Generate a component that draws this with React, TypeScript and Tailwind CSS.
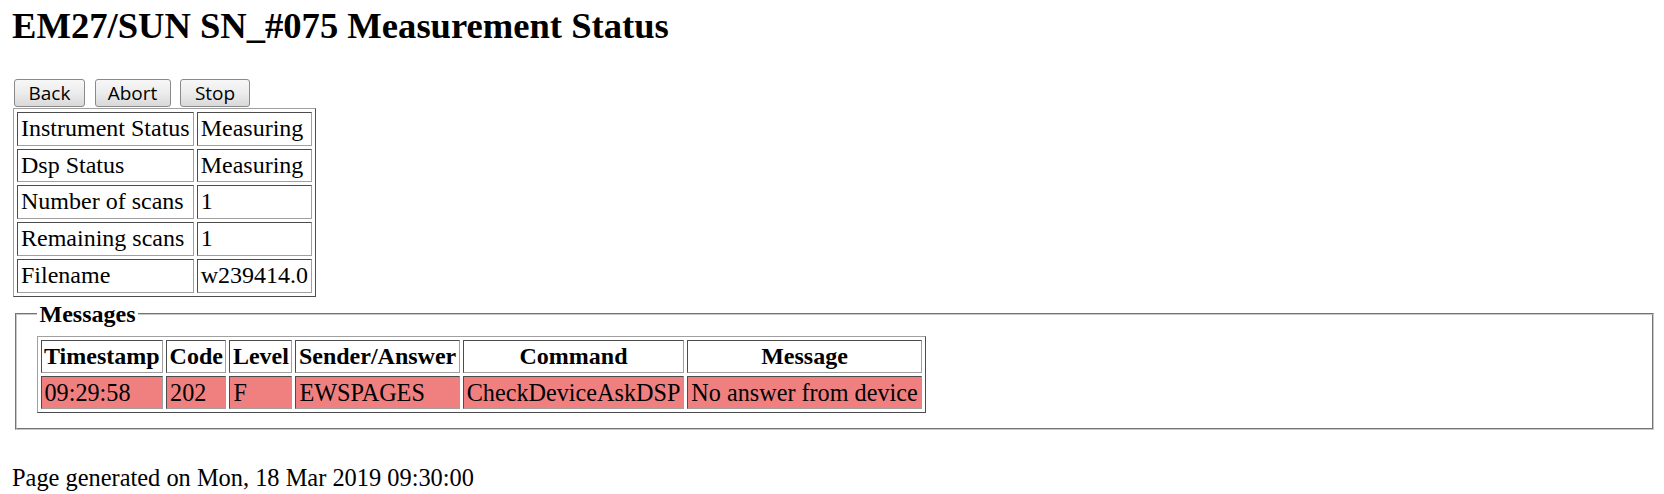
import React from "react";

const serif = "[font-family:'Liberation_Serif','Times_New_Roman',serif]";

const status: [string, string][] = [
  ["Instrument Status", "Measuring"],
  ["Dsp Status", "Measuring"],
  ["Number of scans", "1"],
  ["Remaining scans", "1"],
  ["Filename", "w239414.0"],
];

const headers = ["Timestamp", "Code", "Level", "Sender/Answer", "Command", "Message"];
const messages: string[][] = [
  ["09:29:58", "202", "F", "EWSPAGES", "CheckDeviceAskDSP", "No answer from device"],
];

function Btn({ label, w }: { label: string; w: string }) {
  return (
    <button
      type="button"
      className={`${w} h-[28px] rounded-[3px] border border-[#8a8a8a] bg-linear-to-b from-[#f7f7f7] via-[#ececec] to-[#d9d9d9] text-center text-[19px] leading-[26px] text-black [font-family:'Open_Sans','Noto_Sans',sans-serif]`}
    >
      {label}
    </button>
  );
}

export default function App() {
  return (
    <div className={`${serif} min-h-[494px] bg-white text-black text-[24px]`}>
      <h2 className="pl-[12px] pt-[6px] text-[36.6px] font-bold leading-[40px]">
        EM27/SUN SN_#075 Measurement Status
      </h2>

      <div className="mt-[33px] flex gap-[9.5px] pl-[14px]">
        <Btn label="Back" w="w-[71px]" />
        <Btn label="Abort" w="w-[76px]" />
        <Btn label="Stop" w="w-[70px]" />
      </div>

      <table className="ml-[13px] mt-[1px] border-separate border-spacing-[3px] border border-[#a0a0a0] [border-style:outset]">
        <tbody>
          {status.map(([k, v]) => (
            <tr key={k}>
              <td className="whitespace-nowrap border border-[#a0a0a0] px-[3px] py-[2px] leading-[27.7px] [border-style:inset]">
                {k}
              </td>
              <td className="whitespace-nowrap border border-[#a0a0a0] px-[3px] py-[2px] leading-[27.7px] [border-style:inset]">
                {v}
              </td>
            </tr>
          ))}
        </tbody>
      </table>

      <fieldset className="ml-[15px] mr-[10px] mt-[4px] border-2 border-[#c8c8c8] px-[19.5px] pt-[8px] pb-[15px] [border-style:groove]">
        <legend className="px-[3px] font-bold leading-[27px]">Messages</legend>
        <table className="border-separate border-spacing-[3px] border border-[#a0a0a0] [border-style:outset]">
          <thead>
            <tr>
              {headers.map((h) => (
                <th
                  key={h}
                  className="whitespace-nowrap border border-[#a0a0a0] bg-white px-[2.5px] py-[2px] text-center font-bold leading-[27px] [border-style:inset]"
                >
                  {h}
                </th>
              ))}
            </tr>
          </thead>
          <tbody>
            {messages.map((m) => (
              <tr key={m[0]}>
                {m.map((c, i) => (
                  <td
                    key={i}
                    className="whitespace-nowrap border border-[#a0a0a0] bg-[#f08080] px-[3px] py-[2px] leading-[27px] text-[24.2px] [border-style:inset]"
                  >
                    {c}
                  </td>
                ))}
              </tr>
            ))}
          </tbody>
        </table>
      </fieldset>

      <p className="mt-[34px] pl-[12px] text-[24.4px] leading-[27px]">
        Page generated on Mon, 18 Mar 2019 09:30:00
      </p>
    </div>
  );
}
